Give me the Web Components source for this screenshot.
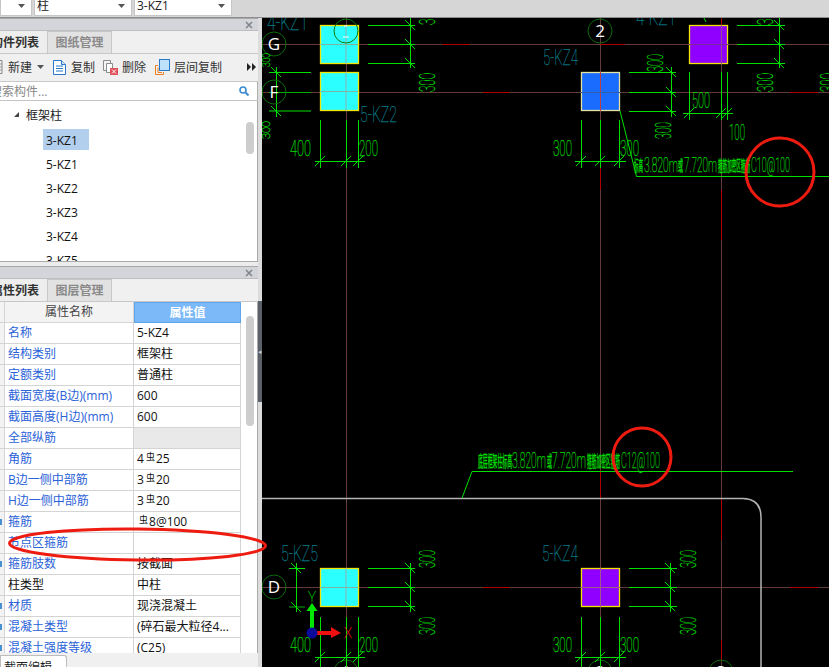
<!DOCTYPE html>
<html lang="zh"><head><meta charset="utf-8"><title>CAD</title>
<style>
html,body{margin:0;padding:0;height:100%;overflow:hidden;background:#d6d6d6}
body{font:12px "Open Sans","Noto Sans CJK SC",sans-serif}
</style></head><body>
<cad-app>
  <top-bar slot="top">
    <combo-box style="width:32px"></combo-box>
    <combo-box style="width:98px">柱</combo-box>
    <combo-box style="width:98px">3-KZ1</combo-box>
  </top-bar>
  <dock-panel slot="side" style="height:244px" active="构件列表" other="图纸管理">
    <tool-bar></tool-bar>
    <search-box></search-box>
    <comp-tree></comp-tree>
  </dock-panel>
  <dock-panel slot="side" style="height:387px;margin-top:4px" active="属性列表" other="图层管理">
    <prop-table></prop-table>
  </dock-panel>
  <bottom-tabs slot="side"></bottom-tabs>
  <cad-canvas slot="canvas"></cad-canvas>
  <ring-note slot="note"></ring-note>
</cad-app>
<script>
const FONT='"Open Sans","Noto Sans CJK SC",sans-serif';
function def(name,html,init){
  customElements.define(name,class extends HTMLElement{
    connectedCallback(){
      if(this.shadowRoot)return;
      this.attachShadow({mode:'open'}).innerHTML=typeof html==='function'?html(this):html;
      if(init)init(this);
    }
  });
}
def('cad-app',`<style>
:host{display:block;position:relative;width:829px;height:667px;overflow:hidden;background:#d6d6d6;color:#000;font:12px ${FONT}}
.g{display:grid;grid-template-columns:258px 4px 567px;grid-template-rows:18px 649px;height:667px}
.t{grid-column:1/4}
.s{display:flex;flex-direction:column;overflow:hidden;background:#ececec}
.gut{background:#dcdcdc;display:flex;flex-direction:column;padding-top:283px}
.gut i{display:flex;align-items:center;height:101px;background:#5b6168;color:#c8c8c8;font:normal 7px "DejaVu Sans",sans-serif;overflow:hidden}
</style><div class="g"><div class="t"><slot name="top"></slot></div>
<div class="s"><slot name="side"></slot></div><div class="gut"><i>◂</i></div><div><slot name="canvas"></slot></div></div><slot name="note"></slot>`);

def('top-bar',`<style>:host{display:flex;gap:2px;height:18px;box-sizing:border-box;background:#d6d6d6;border-bottom:1px solid #8d8d8d;margin-left:-1px;padding-left:1px}</style><slot></slot>`);
def('combo-box',`<style>:host{display:flex;align-items:flex-start;justify-content:space-between;box-sizing:border-box;height:16px;background:#fff;border:solid #c6c6c6;border-width:0 1px 1px 1px;padding:0 6px 0 2px;font-size:12px;line-height:11px;overflow:hidden;color:#222}
svg{margin-top:4px;flex:none}</style><span><slot></slot></span><svg width="7" height="4"><path d="M0 0h7L3.5 4z" fill="#555"/></svg>`);

def('dock-panel',h=>`<style>
:host{display:flex;flex-direction:column;flex:none;box-sizing:border-box;background:#f0f0f0;overflow:hidden}
.bar{height:11px;background:#d4d5da;display:flex;justify-content:flex-end;align-items:center;padding:0 5px 0 0;border-top:1px solid #a9a9a9;border-bottom:1px solid #bdbdc2;flex:none}
.bar svg{display:block;margin-right:0}
.tabs{display:flex;height:23px;box-sizing:border-box;background:#f0f0f0;border-bottom:1px solid #c8c8c8;flex:none}
.a{width:47px;display:flex;justify-content:flex-end;align-items:center;padding:0 8px 1px 0;box-sizing:border-box;background:#eeeeee;font-weight:600;color:#333;white-space:nowrap;overflow:hidden}
.b{width:65px;box-sizing:border-box;display:flex;justify-content:center;align-items:center;padding-bottom:1px;background:#e2e2e2;color:#8a8a8a;border:1px solid #c8c8c8;border-bottom:0;font-weight:600}
.c{flex:1;min-height:0;display:flex;flex-direction:column}
</style>
<div class="bar"><svg width="8" height="8"><path d="M1 1l6 6M7 1L1 7" stroke="#80858c" stroke-width="1.6"/></svg></div>
<div class="tabs"><div class="a"><span>${h.getAttribute('active')}</span></div><div class="b">${h.getAttribute('other')}</div></div>
<div class="c"><slot></slot></div>`);

def('tool-bar',`<style>
:host{display:flex;align-items:center;height:28px;box-sizing:border-box;background:#f0f0f0;border-bottom:1px solid #c8c8c8;flex:none;position:relative;white-space:nowrap;color:#333;padding-bottom:1px}
span{display:block;flex:none}svg{display:block;flex:none}
</style>
<svg width="3" height="14" style="margin-right:5px"><path d="M-7 .5h9v13h-9" fill="none" stroke="#888"/><path d="M0 4h2M0 7h2M0 10h2" stroke="#999"/></svg>
<span>新建</span>
<svg width="7" height="4" style="margin:0 9px 0 5px"><path d="M0 0h7L3.5 4z" fill="#555"/></svg>
<svg width="13" height="15" style="margin-right:5px"><path d="M.5.5h8l4 4v10H.5z" fill="#fff" stroke="#2a79c9"/><path d="M8.5.5v4h4" fill="#cfe3f6" stroke="#2a79c9"/><path d="M3 6h7M3 8.500h7M3 11h7" stroke="#2a79c9"/></svg>
<span>复制</span>
<svg width="15" height="15" style="margin:0 4px 0 8px"><path d="M.5.5h7v10h-7z" fill="#f4f4f4" stroke="#8c8c8c"/><path d="M3.500 3.500h6v9h-6z" fill="#fff" stroke="#8c8c8c"/><rect x="7" y="8" width="8" height="7" fill="#e1505a"/><path d="M9 9.500l4 4M13 9.500l-4 4" stroke="#fff"/></svg>
<span>删除</span>
<svg width="15" height="16" style="margin:0 4px 0 9px"><path d="M3 6.500H.5v9h8V13" fill="none" stroke="#ee7d22"/><path d="M3 8.500v5h4" fill="none" stroke="#ee7d22"/><rect x="4.500" y=".5" width="10" height="11" fill="#bde0fb" stroke="#2a79c9"/></svg>
<span>层间复制</span>
<svg width="9" height="8" style="margin-left:25px"><path d="M0 0l4 4-4 4zM5 0l4 4-4 4z" fill="#222"/></svg>`);

def('search-box',`<style>
:host{display:flex;align-items:center;justify-content:space-between;height:19px;box-sizing:border-box;background:#fff;border-bottom:1px solid #c4c4c4;border-right:1px solid #b0b0b0;padding-right:8px;flex:none;color:#888;overflow:hidden}
div{margin-left:-10px;white-space:nowrap}svg{flex:none}
</style><div>搜索构件...</div><svg width="10" height="10"><circle cx="4" cy="4" r="3" fill="none" stroke="#3d8bd0" stroke-width="1.600"/><path d="M6.500 6.500L9.500 9.500" stroke="#3d8bd0" stroke-width="2"/></svg>`);

def('comp-tree',`<style>
:host{display:block;position:relative;flex:1;min-height:0;background:#fff;border-right:1px solid #aaa;border-bottom:1px solid #aaa;overflow:hidden}
.h{display:flex;align-items:center;height:29px;padding:0 0 2px 14px;box-sizing:border-box;gap:7px;color:#222}
.h svg{flex:none}
.r{height:24px;display:flex;align-items:center;padding:0 0 3px 46px;box-sizing:border-box;color:#111}
.r.sel{position:relative;z-index:0}
.r.sel::before{content:"";position:absolute;z-index:-1;left:43px;top:-1px;width:46px;height:21px;background:#b3cfee}
.th{position:absolute;left:246px;top:21px;width:8px;height:32px;border-radius:4px;background:#cdcdcd}
</style>
<div class="h"><svg width="5" height="5"><path d="M5 0v5H0z" fill="#444"/></svg>框架柱</div>
<div class="r sel">3-KZ1</div><div class="r">5-KZ1</div><div class="r">3-KZ2</div><div class="r">3-KZ3</div><div class="r">3-KZ4</div><div class="r">3-KZ5</div>
<div class="th"></div>`);

const ROWS=[['名称','5-KZ4'],['结构类别','框架柱'],['定额类别','普通柱'],['截面宽度(B边)(mm)','600'],['截面高度(H边)(mm)','600'],['全部纵筋','',1],['角筋','4<b>虫</b>25'],['B边一侧中部筋','3<b>虫</b>20'],['H边一侧中部筋','3<b>虫</b>20'],['箍筋','<b>虫</b>8@100',0,1],['节点区箍筋',''],['箍筋肢数','按截面',0,1],['柱类型','中柱',2],['材质','现浇混凝土',0,1],['混凝土类型','(碎石最大粒径4...',0,1],['混凝土强度等级','(C25)',0,1]];
def('prop-table',`<style>
:host{display:block;position:relative;flex:1;min-height:0;background:#fff;border-right:1px solid #aaa;border-bottom:1px solid #aaa;overflow:hidden;box-sizing:border-box;height:352px;flex:none}
.g{display:grid;grid-template-columns:5px 129px 107px;grid-auto-rows:21px;width:241px}
.g>div{box-sizing:border-box;border-right:1px solid #d4d4d4;border-bottom:1px solid #d4d4d4;display:flex;align-items:center;white-space:nowrap;overflow:hidden;padding-bottom:2px}
.hd{justify-content:center;background:#f3f3f3;color:#444}
.hv{justify-content:center;background:#7cb9f8;color:#fff;font-weight:600;border:1px solid #5ea5ee !important}
.g>.st{background:#f3f3f3;padding:0}
.st i{display:block;width:2px;height:6px;background:#4a90d0}
.n{padding-left:3px;color:#2a62d8}
.k{color:#111}
.v{padding-left:3px;color:#111}
.v b{font:normal 9px "Noto Sans CJK SC",sans-serif;position:relative;top:-2px;margin:0 1px 0 2px}
.gr{background:#e9e9e9}
.th{position:absolute;left:246px;top:14px;width:8px;height:110px;border-radius:4px;background:#cdcdcd}
</style><div class="g"><div class="st"></div><div class="hd">属性名称</div><div class="hv">属性值</div>${ROWS.map(r=>`<div class="st">${r[3]?'<i></i>':''}</div><div class="n${r[2]===2?' k':''}">${r[0]}</div><div class="v${r[2]===1?' gr':''}">${r[1]}</div>`).join('')}</div><div class="th"></div>`);

def('bottom-tabs',`<style>
:host{display:flex;flex:1;align-items:flex-end;background:#f0f0f0;overflow:hidden;padding-top:4px}
div{width:67px;height:12px;box-sizing:border-box;background:#fff;border:1px solid #bdbdbd;border-bottom:0;border-radius:0 3px 0 0;padding-left:3px;line-height:24px;white-space:nowrap;overflow:hidden;color:#222}
</style><div>截面编辑</div>`);

def('ring-note',`<style>:host{position:absolute;left:0;top:520px;width:280px;height:50px;display:block;pointer-events:none}svg{display:block}</style>
<svg width="280" height="50"><ellipse cx="137.500" cy="24.500" rx="128" ry="15.500" transform="rotate(.6 137.500 24.500)" fill="none" stroke="#ee1c10" stroke-width="3"/></svg>`);

/* ---------- drawing ---------- */
const G='#00e000',T='#0a8090';
let o=[];
const L=(a,b,c,d,col=G,w=1)=>o.push(`<line x1="${a}" y1="${b}" x2="${c}" y2="${d}" stroke="${col}" stroke-width="${w}"/>`);
const R=(x,y,w,h,f,s='#f2e600')=>o.push(`<rect x="${x+.5}" y="${y+.5}" width="${w}" height="${h}" fill="${f}" stroke="${s}" stroke-width="1.300"/>`);
const TX=(s,x0,x1,y0,y1,col=G,fam='Roboto')=>{const sz=(y1-y0)/.71;o.push(`<text x="${x0}" y="${y1}" font-family='${fam}' font-weight="100" font-size="${sz.toFixed(1)}" fill="${col}" stroke="${col}" stroke-width=".25" textLength="${x1-x0}" lengthAdjust="spacingAndGlyphs">${s}</text>`)};
const CJ=(s,x0,x1,y0,y1)=>o.push(`<text x="${x0}" y="${y1-1}" font-family='"Noto Sans CJK SC"' font-size="${y1-y0}" fill="${G}" stroke="${G}" stroke-width=".35" textLength="${x1-x0}" lengthAdjust="spacingAndGlyphs">${s}</text>`);
const RT=(s,x0,x1,y0,y1)=>{const sz=(x1-x0)/.71;o.push(`<text transform="translate(${x1} ${y1}) rotate(-90)" font-family='Roboto' font-weight="100" font-size="${sz.toFixed(1)}" fill="${G}" stroke="${G}" stroke-width=".25" textLength="${y1-y0}" lengthAdjust="spacingAndGlyphs">${s}</text>`)};
const B=(s,x,y)=>{o.push(`<circle cx="${x}" cy="${y}" r="12" fill="none" stroke="#0b6a0b"/><text x="${x}" y="${y+6}" text-anchor="middle" font-family='"Open Sans"' font-size="17" fill="#fff">${s}</text>`)};
const tv=(x,y)=>L(x-5,y-5,x+5,y+5);
const th=(x,y)=>L(x-5,y+5,x+5,y-5);
const VD=(x0,x1,xv,ys,top,bot)=>{ys.forEach(y=>{L(x0,y+.5,x1,y+.5);tv(xv,y)});L(xv+.5,top,xv+.5,bot)};
const HD=(xs,y0,y1,yh,l,r)=>{xs.forEach(x=>{L(x+.5,y0,x+.5,y1);th(x,yh)});L(l,yh+.5,r,yh+.5)};

function axes(){
  const c='#653a3a',red='#b00000';
  [44,92,587].forEach(y=>L(262,y+.5,829,y+.5,c));
  [346,600,721].forEach(x=>L(x+.5,18,x+.5,667,c));
  [[44,442,470],[44,600,625],[92,483,510],[92,790,818],[587,483,510],[587,790,818]].forEach(a=>L(a[1],a[0]+.5,a[2],a[0]+.5,red));
  [[600,120,190],[721,18,30],[721,190,240],[600,470,498],[721,498,540],[721,640,660]].forEach(a=>L(a[0]+.5,a[1],a[0]+.5,a[2],red));
}
function draw(){
  o=[];
  axes();
  o.push(`<path d="M262 498.500H743Q761 499 761 517V667" fill="none" stroke="#b4b4b4" stroke-width="1.500"/>`);
  const over=(x0,y0)=>{L(x0+26,y0,x0+26,y0+39,'#8fb0b0');L(x0,y0+19.5,x0+38,y0+19.5,'#7fb5a0')};
  R(320,25,38,38,'#2cffff');over(320,25);
  R(320,72,38,38,'#2cffff');over(320,72);
  R(320,568,38,38,'#2cffff');over(320,568);
  R(581,72,38,38,'#1a6cff','#e6e2a0');L(600.5,72,600.5,111,'#c04040');L(581,92.5,620,92.5,'#2f5fa8');
  R(689,25,38,38,'#8f00ff');L(721.5,25,721.5,64,'#9a4a9a');L(689,44.5,728,44.5,'#7a2a9a');
  R(581,568,38,38,'#8f00ff');L(600.5,568,600.5,607,'#a05a8a');L(581,587.5,620,587.5,'#a05a8a');
  /* left dims sit under the axis bubbles */
  L(269,72.500,311,72.500);L(269,92.500,311,92.500,'#00b000');L(269,111,311,111);L(276.500,67,276.500,117);tv(276,72);tv(276,111);
  L(289,568.500,305,568.500);L(289,607,305,607,'#00b000');L(296.500,563,296.500,612);tv(296,568);tv(296,607);
  B('G',274,44);B('F',274,92);B('D',274,587);B('2',600,31);
  o.push(`<circle cx="346" cy="31" r="12" fill="none" stroke="#0b7a0b"/>`);L(344,26,347,26,'#fff');L(343,37,349,37,'#fff');
  B('1',346,672);B('2',600,672);B('3',721,672);
  VD(368,415,410,[25,44,63],15,68);
  VD(629,676,671,[72,92,111],67,117);
  VD(737,785,779,[25,44,63],15,68);
  VD(368,415,410,[568,587,606],563,612);
  VD(629,677,670,[568,587,606],563,612);
  HD([320,346,358],120,168,161,315,365);
  HD([581,600,619],120,168,161,575,626);
  HD([689,721,727],72,120,113,683,733);
  HD([320,346,358],617,667,657,315,365);
  HD([581,600,619],617,667,657,575,626);
  [[290,311,'400'],[359,378,'200'],[553,572,'300'],[620,639,'300']].forEach(a=>TX(a[2],a[0],a[1],140,156));
  [[290,311,'400'],[359,378,'200'],[553,572,'300'],[620,639,'300']].forEach(a=>TX(a[2],a[0],a[1],637,652));
  TX('500',692,710,92,108);TX('100',729,745,124,140);
  [[419,435,73,92],[419,435,6,25],[647,663,54,72],[655,671,122,139],[757,773,73,92],[757,773,6,25],[820,836,73,92],[262,270,53,67],[262,270,121,139],[419,435,550,568],[419,435,617,635],[680,696,550,568],[680,696,617,635]].forEach(a=>RT('300',a[0],a[1],a[2],a[3]));
  TX('4-KZ1',267,308,14,30,T);TX('4-KZ1',636,676,9,25,T);
  TX('5-KZ2',360,397,106,122,T);TX('5-KZ4',543,578,49,65,T);TX('5-KZ5',281,318,545,561,T);TX('5-KZ4',542,578,545,561,T);
  o.push(`<path d="M620 111L636.500 176.500H829M462 498L472 471.500H793M701 12L706 22" fill="none" stroke="${G}"/>`);
  CJ('标高',634,643,157,172);TX('3.820m',644,678,157,172);CJ('或',678,683,157,172);TX('7.720m',684,717,157,172);CJ('箍筋加密区箍筋',718,750,157,172);TX('C10@100',751,790,157,172);
  CJ('底层框架柱标高',478,512,452,468);TX('3.820m',512,546,452,468);CJ('或',547,552,452,468);TX('7.720m',552,586,452,468);CJ('箍筋加密区箍筋',587,620,452,468);TX('C12@100',621,660,452,468);
  o.push(`<circle cx="780" cy="172" r="34" fill="none" stroke="#ee1c10" stroke-width="3"/><circle cx="642" cy="457" r="29" fill="none" stroke="#ee1c10" stroke-width="3"/>`);
  o.push(`<path d="M310 628V611H306.500L312 603L317.500 611H314V628z" fill="#00e800"/><path d="M317 631H331V627L341 633L331 638V635H317z" fill="#f01010"/><circle cx="312" cy="633" r="5.500" fill="#0a0a9a"/>`);
  TX('Y',308,316,592,602,'#00c000');TX('X',344,352,628,638,'#e01010');
  return o.join('');
}
def('cad-canvas',`<style>:host{display:block;width:567px;height:649px;background:#000;overflow:hidden}svg{display:block}</style>
<svg width="567" height="649" viewBox="262 18 567 649">${draw()}</svg>`);
</script>
</body></html>
